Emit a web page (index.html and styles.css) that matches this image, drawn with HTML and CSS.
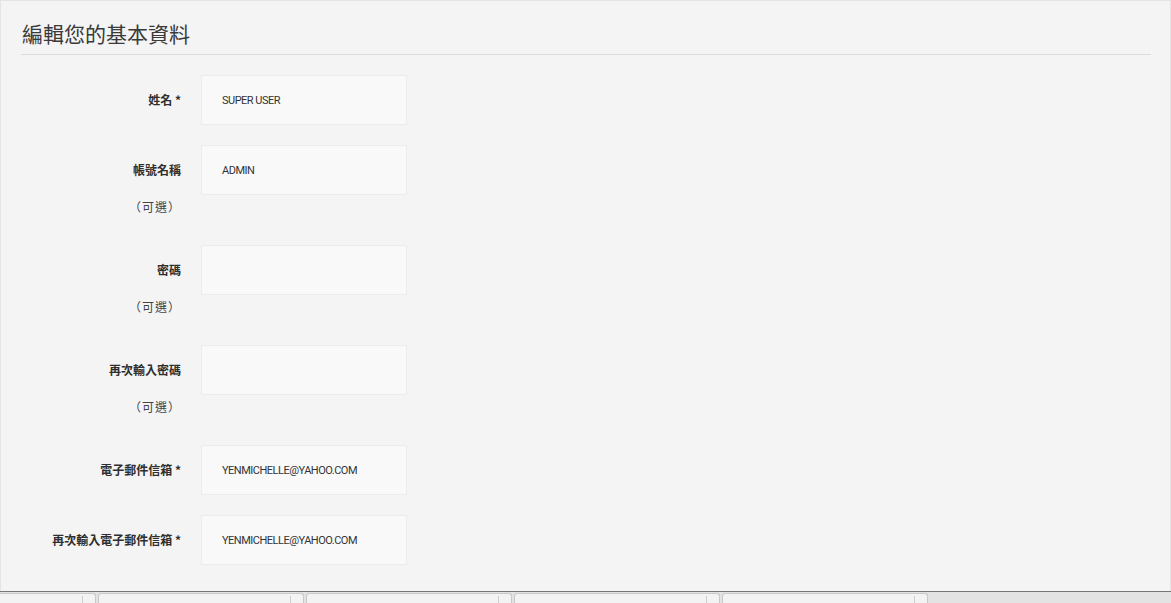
FILE: index.html
```html
<!DOCTYPE html>
<html lang="zh-Hant">
<head>
  <meta charset="UTF-8" />
  <meta name="viewport" content="width=device-width, initial-scale=1.0" />
  <title>編輯您的基本資料</title>
  <link rel="stylesheet" href="styles.css">
</head>
<body>
  <div class="profile-page">
    <h2 class="page-title">編輯您的基本資料</h2>
    <form class="profile-form" method="POST">
      <div class="form-row">
        <div class="label-col">
          <label for="name">姓名 *</label>
        </div>
        <input type="text" id="name" name="name" value="SUPER USER" />
      </div>

      <div class="form-row">
        <div class="label-col">
          <label for="username">帳號名稱</label>
          <span class="hint">（可選）</span>
        </div>
        <input type="text" id="username" name="username" value="ADMIN" />
      </div>

      <div class="form-row">
        <div class="label-col">
          <label for="password1">密碼</label>
          <span class="hint">（可選）</span>
        </div>
        <input type="password" id="password1" name="password1" />
      </div>

      <div class="form-row">
        <div class="label-col">
          <label for="password2">再次輸入密碼</label>
          <span class="hint">（可選）</span>
        </div>
        <input type="password" id="password2" name="password2" />
      </div>

      <div class="form-row">
        <div class="label-col">
          <label for="email1">電子郵件信箱 *</label>
        </div>
        <input type="email" id="email1" name="email1" value="YENMICHELLE@YAHOO.COM" />
      </div>

      <div class="form-row">
        <div class="label-col">
          <label for="email2">再次輸入電子郵件信箱 *</label>
        </div>
        <input type="email" id="email2" name="email2" value="YENMICHELLE@YAHOO.COM" />
      </div>
    </form>
  </div>

  <div class="tab-strip">
    <div class="tab tab-first"></div>
    <div class="tab"></div>
    <div class="tab"></div>
    <div class="tab"></div>
    <div class="tab"></div>
  </div>
</body>
</html>
```

FILE: styles.css
```css
html, body {
  margin: 0;
  padding: 0;
}

body {
  font-family: "Noto Sans CJK TC", "Noto Sans", sans-serif;
  background: #f4f4f4;
  color: #333;
  width: 1171px;
  height: 603px;
  overflow: hidden;
}

.profile-page {
  box-sizing: border-box;
  height: 591px;
  padding: 0 19px 0 20px;
  border: 1px solid #e4e4e4;
  border-bottom: none;
  background: #f4f4f4;
}

.page-title {
  margin: 0;
  padding: 18px 0 0 1px;
  height: 35px;
  font-size: 21px;
  font-weight: 400;
  line-height: 28px;
  color: #3a3a3a;
  border-bottom: 1px solid #dcdcdc;
}

.profile-form {
  padding-top: 20px;
}

.form-row {
  display: flex;
  align-items: flex-start;
  margin-bottom: 20px;
}

.label-col {
  width: 160px;
  display: flex;
  flex-direction: column;
  align-items: flex-end;
  margin-right: 20px;
}

.label-col label {
  font-size: 12px;
  font-weight: 700;
  line-height: 50px;
  color: #2e2e2e;
}

.label-col .hint {
  font-size: 12px;
  line-height: 24px;
  padding-bottom: 6px;
  color: #444;
  letter-spacing: 1px;
}

.form-row input {
  box-sizing: border-box;
  width: 206px;
  height: 50px;
  padding: 0 20px;
  border: 1px solid #ececec;
  background: #f9f9f9;
  font-family: Roboto, "Liberation Sans", sans-serif;
  font-size: 11px;
  letter-spacing: -0.5px;
  color: #333;
  outline: none;
}

/* window tab strip along the bottom */
.tab-strip {
  display: flex;
  gap: 2px;
  height: 11px;
  border-top: 1px solid #777;
  background: #e3e3e3;
}

.tab {
  position: relative;
  box-sizing: border-box;
  width: 206px;
  height: 10px;
  margin-top: 1px;
  border: 1px solid #c9c9c9;
  border-bottom: none;
  border-radius: 3px 3px 0 0;
  background: #f3f3f3;
}

.tab-first {
  width: 96px;
  border-left: none;
  border-radius: 0 3px 0 0;
}

.tab::after {
  content: "";
  position: absolute;
  right: 12px;
  top: 2px;
  width: 1px;
  height: 9px;
  background: #cfcfcf;
}
```
